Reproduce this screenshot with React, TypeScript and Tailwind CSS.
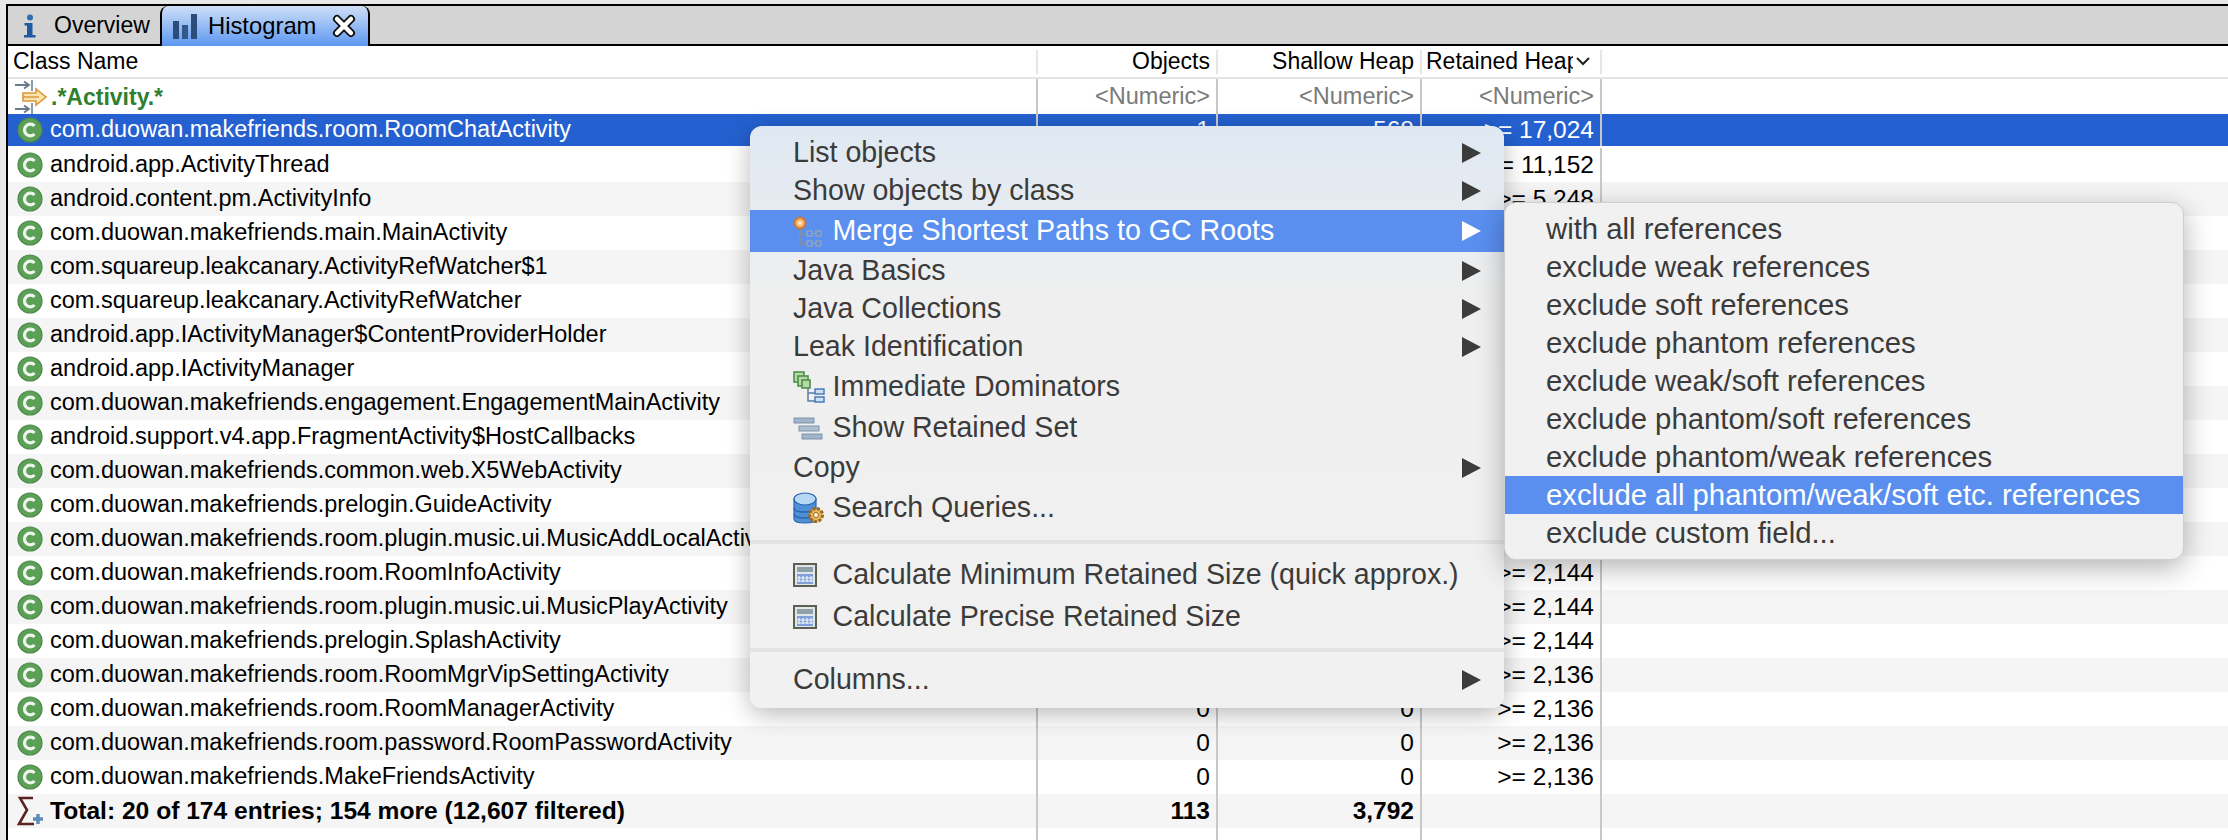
import React from "react";

const rows: [string, string, string, string][] = [
  ["com.duowan.makefriends.room.RoomChatActivity", "1", "568", ">= 17,024"],
  ["android.app.ActivityThread", "", "", ">= 11,152"],
  ["android.content.pm.ActivityInfo", "", "", ">= 5,248"],
  ["com.duowan.makefriends.main.MainActivity", "", "", ""],
  ["com.squareup.leakcanary.ActivityRefWatcher$1", "", "", ""],
  ["com.squareup.leakcanary.ActivityRefWatcher", "", "", ""],
  ["android.app.IActivityManager$ContentProviderHolder", "", "", ""],
  ["android.app.IActivityManager", "", "", ""],
  ["com.duowan.makefriends.engagement.EngagementMainActivity", "", "", ""],
  ["android.support.v4.app.FragmentActivity$HostCallbacks", "", "", ""],
  ["com.duowan.makefriends.common.web.X5WebActivity", "", "", ""],
  ["com.duowan.makefriends.prelogin.GuideActivity", "", "", ""],
  ["com.duowan.makefriends.room.plugin.music.ui.MusicAddLocalActivity", "", "", ""],
  ["com.duowan.makefriends.room.RoomInfoActivity", "", "", ">= 2,144"],
  ["com.duowan.makefriends.room.plugin.music.ui.MusicPlayActivity", "", "", ">= 2,144"],
  ["com.duowan.makefriends.prelogin.SplashActivity", "", "", ">= 2,144"],
  ["com.duowan.makefriends.room.RoomMgrVipSettingActivity", "", "", ">= 2,136"],
  ["com.duowan.makefriends.room.RoomManagerActivity", "0", "0", ">= 2,136"],
  ["com.duowan.makefriends.room.password.RoomPasswordActivity", "0", "0", ">= 2,136"],
  ["com.duowan.makefriends.MakeFriendsActivity", "0", "0", ">= 2,136"],
];

function ClassIcon() {
  return (
    <svg width="26" height="26" viewBox="0 0 26 26" className="shrink-0">
      <circle cx="13" cy="13" r="12" fill="#5c9f57" stroke="#4a8a48" strokeWidth="1.200" />
      <path d="M17.500 9a5.800 5.800 0 1 0 0 8" fill="none" stroke="#eef5ec" strokeWidth="3.200" />
    </svg>
  );
}

function FilterIcon() {
  return (
    <svg width="34" height="34" viewBox="0 0 34 34" className="shrink-0">
      <path d="M1 5h14M10 1.500 15 5l-5 3.500M1 29h14M10 25.500l5 3.500-5 3.500" fill="none" stroke="#6b7a8c" strokeWidth="1.800" />
      <path d="M18 0v11M18 23v11" stroke="#6b7a8c" strokeWidth="1.500" />
      <path d="M9 13h13V9l10 8-10 8v-4H9z" fill="#fbe3b0" stroke="#d99a3a" strokeWidth="1.600" />
      <path d="M9 17h16" stroke="#d99a3a" strokeWidth="1.500" />
    </svg>
  );
}

function InfoIcon() {
  return (
    <svg width="14" height="24" viewBox="0 0 14 24">
      <circle cx="7" cy="3.500" r="3" fill="#2f6db0" />
      <path d="M1.500 9h8v12h3v2.500H1v-2.500h3V11.500H1.500z" fill="#1f5a9e" />
    </svg>
  );
}

function BarsIcon() {
  return (
    <svg width="24" height="25" viewBox="0 0 24 25" className="shrink-0">
      <rect x="0" y="7" width="6" height="18" fill="#2c4d7c" />
      <rect x="9" y="11" width="6" height="14" fill="#34588a" />
      <rect x="18" y="0" width="6" height="25" fill="#2c4d7c" />
    </svg>
  );
}

function CloseIcon() {
  return (
    <svg width="24" height="24" viewBox="0 0 24 24" className="shrink-0">
      <path d="M5 5 19 19M19 5 5 19" stroke="#111" strokeWidth="8" strokeLinecap="round" />
      <path d="M5 5 19 19M19 5 5 19" stroke="#fff" strokeWidth="4.500" strokeLinecap="round" />
    </svg>
  );
}

function SigmaIcon() {
  return (
    <svg width="28" height="30" viewBox="0 0 28 30" className="shrink-0">
      <path d="M17 2H4l7 12-8 14h15" fill="none" stroke="#5c2420" strokeWidth="2.600" />
      <path d="M22 18v10M17 23h10" stroke="#5d8db8" strokeWidth="3.500" />
    </svg>
  );
}

function MergeIcon() {
  return (
    <svg width="30" height="32" viewBox="0 0 30 32" className="shrink-0">
      <circle cx="7" cy="8" r="5.500" fill="#f6b36e" stroke="#c67a33" strokeWidth="2" />
      <circle cx="7" cy="8" r="2" fill="#fde7c8" />
      <path d="M7 14v15h6M7 19h6" fill="none" stroke="#8a8f96" strokeWidth="1.500" />
      <rect x="14" y="16" width="5" height="5" fill="none" stroke="#8fa4bd" strokeWidth="1.500" />
      <rect x="23" y="16" width="5" height="5" fill="none" stroke="#8fa4bd" strokeWidth="1.500" />
      <rect x="14" y="26" width="5" height="5" fill="none" stroke="#8fa4bd" strokeWidth="1.500" />
      <rect x="23" y="26" width="5" height="5" fill="none" stroke="#8fa4bd" strokeWidth="1.500" />
      <path d="M19 18.500h4M19 28.500h4" stroke="#8fa4bd" strokeWidth="1.200" />
    </svg>
  );
}

function DominatorIcon() {
  return (
    <svg width="32" height="32" viewBox="0 0 32 32" className="shrink-0">
      <rect x="1" y="1" width="10" height="10" fill="#b7d9a8" stroke="#4f8f4a" strokeWidth="1.600" />
      <rect x="5" y="5" width="10" height="10" fill="#b7d9a8" stroke="#4f8f4a" strokeWidth="1.600" />
      <rect x="9" y="9" width="8" height="8" fill="#b7d9a8" stroke="#4f8f4a" strokeWidth="1.600" />
      <path d="M15 17v13h8M15 22h8" fill="none" stroke="#5d7ea8" strokeWidth="1.500" />
      <rect x="22" y="18" width="9" height="5" fill="#cfe0f3" stroke="#3f74b8" strokeWidth="1.400" />
      <rect x="22" y="26" width="9" height="5" fill="#cfe0f3" stroke="#3f74b8" strokeWidth="1.400" />
    </svg>
  );
}

function RetainedIcon() {
  return (
    <svg width="30" height="24" viewBox="0 0 30 24" className="shrink-0">
      <rect x="1" y="1" width="20" height="5" fill="#9fb4c9" stroke="#7d93aa" />
      <rect x="6" y="9" width="20" height="5" fill="#aebfd2" stroke="#7d93aa" />
      <rect x="9" y="17" width="20" height="5" fill="#9fb4c9" stroke="#7d93aa" />
    </svg>
  );
}

function SearchIcon() {
  return (
    <svg width="32" height="32" viewBox="0 0 32 32" className="shrink-0">
      <path d="M1 7v20c0 3 4 4 11 4s11-1 11-4V7z" fill="#4f8fd8" stroke="#2d65ad" strokeWidth="1.200" />
      <path d="M1 16c0 3 4 4 11 4s11-1 11-4M1 22c0 3 4 4 11 4s11-1 11-4" fill="none" stroke="#2d65ad" strokeWidth="1.500" />
      <ellipse cx="12" cy="7" rx="11" ry="6" fill="#b6d8f4" stroke="#2d65ad" strokeWidth="1.200" />
      <circle cx="23" cy="23" r="6.500" fill="#e7b65a" stroke="#9a6a22" strokeWidth="3" strokeDasharray="3 1.400" />
      <circle cx="23" cy="23" r="2.500" fill="#fff6dc" stroke="#9a6a22" />
    </svg>
  );
}

function CalcIcon() {
  return (
    <svg width="24" height="24" viewBox="0 0 24 24" className="shrink-0">
      <rect x="1" y="1" width="22" height="22" fill="#dfe6ea" stroke="#5b5f4e" strokeWidth="2" />
      <rect x="4" y="4" width="16" height="5" fill="#8fa1a8" />
      <rect x="4" y="11" width="16" height="10" fill="#7f9fd6" />
      <path d="M6 13v6M10 13v6M14 13v6M18 13v6M4 15h16M4 18h16" stroke="#eef3f8" strokeWidth="1.200" />
    </svg>
  );
}

function Arrow({ light }: { light?: boolean }) {
  return (
    <svg width="19" height="20" viewBox="0 0 19 20" className="shrink-0">
      <path d="M0 0 19 10 0 20z" fill={light ? "#ffffff" : "#3c3c3c"} />
    </svg>
  );
}

type Item = { label: string; icon?: React.ReactNode; arrow?: boolean; active?: boolean; height?: string };

function MenuRow({ label, icon, arrow, active, height = "h-[38px]" }: Item) {
  return (
    <div
      className={
        height +
        (active ? " bg-[#5a8ff0] text-white " : " text-[#3b3b3b] ") +
        "flex items-center pl-[43px] pr-[23px]"
      }
    >
      {icon ? <span className="flex w-[39.500px] shrink-0 items-center">{icon}</span> : null}
      <span className="flex-1 pb-[2px] whitespace-nowrap">{label}</span>
      {arrow ? <Arrow light={active} /> : null}
    </div>
  );
}

function SubRow({ label, active }: { label: string; active?: boolean }) {
  return (
    <div className={(active ? "bg-[#5a8ff0] text-white " : "text-[#3b3b3b] ") + "flex h-[38px] items-center pl-[41px] pb-[1px] whitespace-nowrap"}>
      {label}
    </div>
  );
}

function Separator({ height }: { height: string }) {
  return (
    <div className={height + " flex items-center"}>
      <div className="h-[4px] w-full bg-[#e3e3e3]" />
    </div>
  );
}

function TableRow({ data, index }: { data: [string, string, string, string]; index: number }) {
  const selected = index === 0;
  const base = selected
    ? "border-b-2 border-white bg-[#2460cf] text-white"
    : index % 2 === 0
      ? "bg-[#f5f5f5] text-black"
      : "bg-white text-black";
  const cell = "flex items-center justify-end pr-[6px] border-r-2 border-[#c8c8c8] h-full text-[24.5px]";
  return (
    <div className={"flex h-[34px] " + base}>
      <div className="flex h-full w-[1030px] items-center gap-[7px] overflow-hidden border-r-2 border-[#c8c8c8] pl-[9px] text-[23.5px] whitespace-nowrap">
        <ClassIcon />
        <span>{data[0]}</span>
      </div>
      <div className={cell + " w-[180px]"}>{data[1]}</div>
      <div className={cell + " w-[204px]"}>{data[2]}</div>
      <div className={cell + " w-[180px]"}>{data[3]}</div>
    </div>
  );
}

export default function App() {
  const sub = [
    "with all references",
    "exclude weak references",
    "exclude soft references",
    "exclude phantom references",
    "exclude weak/soft references",
    "exclude phantom/soft references",
    "exclude phantom/weak references",
    "exclude all phantom/weak/soft etc. references",
    "exclude custom field...",
  ];
  return (
    <div className="relative h-[840px] w-[2228px] overflow-hidden bg-[#e8e8e8] pt-[4px] pl-[6px] font-['Liberation_Sans',Arial,sans-serif] text-[23px] leading-none">
      <div className="flex h-[836px] flex-col border-t-2 border-l-2 border-black bg-white">
        <div className="flex h-[40px] shrink-0 items-stretch border-b-2 border-black bg-[#d4d4d4] text-black">
          <div className="flex w-[152px] items-center gap-[17px] pt-[1px] pl-[15px]">
            <InfoIcon />
            <span>Overview</span>
          </div>
          <div className="mb-[-2px] flex w-[210px] items-center rounded-t-[8px] border-x-2 border-black bg-gradient-to-b from-[#cfdff6] to-[#5c97ef] pl-[11px] text-[23.8px]">
            <BarsIcon />
            <span className="ml-[11px]">Histogram</span>
            <span className="ml-[16px]"><CloseIcon /></span>
          </div>
        </div>

        <div className="flex h-[33px] shrink-0 items-center border-b-2 border-[#e4e4e4]">
          <div className="flex h-[24px] w-[1030px] items-center border-r-2 border-[#e6e6e6] pl-[5px]">Class Name</div>
          <div className="flex h-[24px] w-[180px] items-center justify-end border-r-2 border-[#e6e6e6] pr-[6px]">Objects</div>
          <div className="flex h-[24px] w-[204px] items-center justify-end border-r-2 border-[#e6e6e6] pr-[6px]">Shallow Heap</div>
          <div className="flex h-[24px] w-[180px] items-center justify-between border-r-2 border-[#e6e6e6] pr-[10px] pl-[4px]">
            <span className="w-[147px] overflow-hidden whitespace-nowrap">Retained Heap</span>
            <svg width="14" height="9" viewBox="0 0 14 9" className="shrink-0">
              <path d="M1 1l6 6 6-6" fill="none" stroke="#222" strokeWidth="2" />
            </svg>
          </div>
        </div>

        <div className="flex h-[35px] shrink-0 items-center text-[23.5px] text-[#7a7a7a]">
          <div className="flex h-full w-[1030px] items-center gap-[3px] border-r-2 border-[#c8c8c8] pl-[6px] text-[23px] font-bold text-[#2f7f2f]">
            <FilterIcon />
            <span className="pt-[1px]">.*Activity.*</span>
          </div>
          <div className="flex h-full w-[180px] items-center justify-end border-r-2 border-[#c8c8c8] pr-[6px]">&lt;Numeric&gt;</div>
          <div className="flex h-full w-[204px] items-center justify-end border-r-2 border-[#c8c8c8] pr-[6px]">&lt;Numeric&gt;</div>
          <div className="flex h-full w-[180px] items-center justify-end border-r-2 border-[#c8c8c8] pr-[6px]">&lt;Numeric&gt;</div>
        </div>

        {rows.map((r, i) => (
          <TableRow key={r[0]} data={r} index={i} />
        ))}

        <div className="flex h-[34px] shrink-0 bg-[#f5f5f5] font-bold text-black">
          <div className="flex h-full w-[1030px] items-center gap-[6px] border-r-2 border-[#c8c8c8] pl-[8px] text-[24.6px]">
            <SigmaIcon />
            <span>Total: 20 of 174 entries; 154 more (12,607 filtered)</span>
          </div>
          <div className="flex h-full w-[180px] items-center justify-end border-r-2 border-[#c8c8c8] pr-[6px] text-[24.5px]">113</div>
          <div className="flex h-full w-[204px] items-center justify-end border-r-2 border-[#c8c8c8] pr-[6px] text-[24.5px]">3,792</div>
          <div className="h-full w-[180px] border-r-2 border-[#c8c8c8]" />
        </div>

        <div className="flex flex-1">
          <div className="w-[1030px] border-r-2 border-[#c8c8c8]" />
          <div className="w-[180px] border-r-2 border-[#c8c8c8]" />
          <div className="w-[204px] border-r-2 border-[#c8c8c8]" />
          <div className="w-[180px] border-r-2 border-[#c8c8c8]" />
        </div>
      </div>

      <div className="absolute top-[126px] left-[750px] h-[582px] w-[754px] overflow-hidden rounded-[12px] bg-gradient-to-b from-[#dfe8f2] via-[#efefef] via-30% to-[#f1f1f1] pt-[8px] text-[28.6px] shadow-[0_6px_24px_rgba(0,0,0,0.28)]">
        <MenuRow label="List objects" arrow />
        <MenuRow label="Show objects by class" arrow />
        <MenuRow label="Merge Shortest Paths to GC Roots" arrow active height="h-[42px]" icon={<MergeIcon />} />
        <MenuRow label="Java Basics" arrow />
        <MenuRow label="Java Collections" arrow />
        <MenuRow label="Leak Identification" arrow />
        <MenuRow label="Immediate Dominators" height="h-[42px]" icon={<DominatorIcon />} />
        <MenuRow label="Show Retained Set" height="h-[41px]" icon={<RetainedIcon />} />
        <MenuRow label="Copy" arrow />
        <MenuRow label="Search Queries..." height="h-[42px]" icon={<SearchIcon />} />
        <Separator height="h-[25px]" />
        <MenuRow label="Calculate Minimum Retained Size (quick approx.)" height="h-[42px]" icon={<CalcIcon />} />
        <MenuRow label="Calculate Precise Retained Size" height="h-[42px]" icon={<CalcIcon />} />
        <Separator height="h-[23px]" />
        <MenuRow label="Columns..." arrow />
      </div>

      <div className="absolute top-[202px] left-[1504px] h-[358px] w-[680px] overflow-hidden rounded-[12px] border border-[#cfcfcf] bg-[#f1f1f1] pt-[7px] text-[29.3px] shadow-[0_8px_28px_rgba(0,0,0,0.3)]">
        {sub.map((s, i) => (
          <SubRow key={s} label={s} active={i === 7} />
        ))}
      </div>
    </div>
  );
}
